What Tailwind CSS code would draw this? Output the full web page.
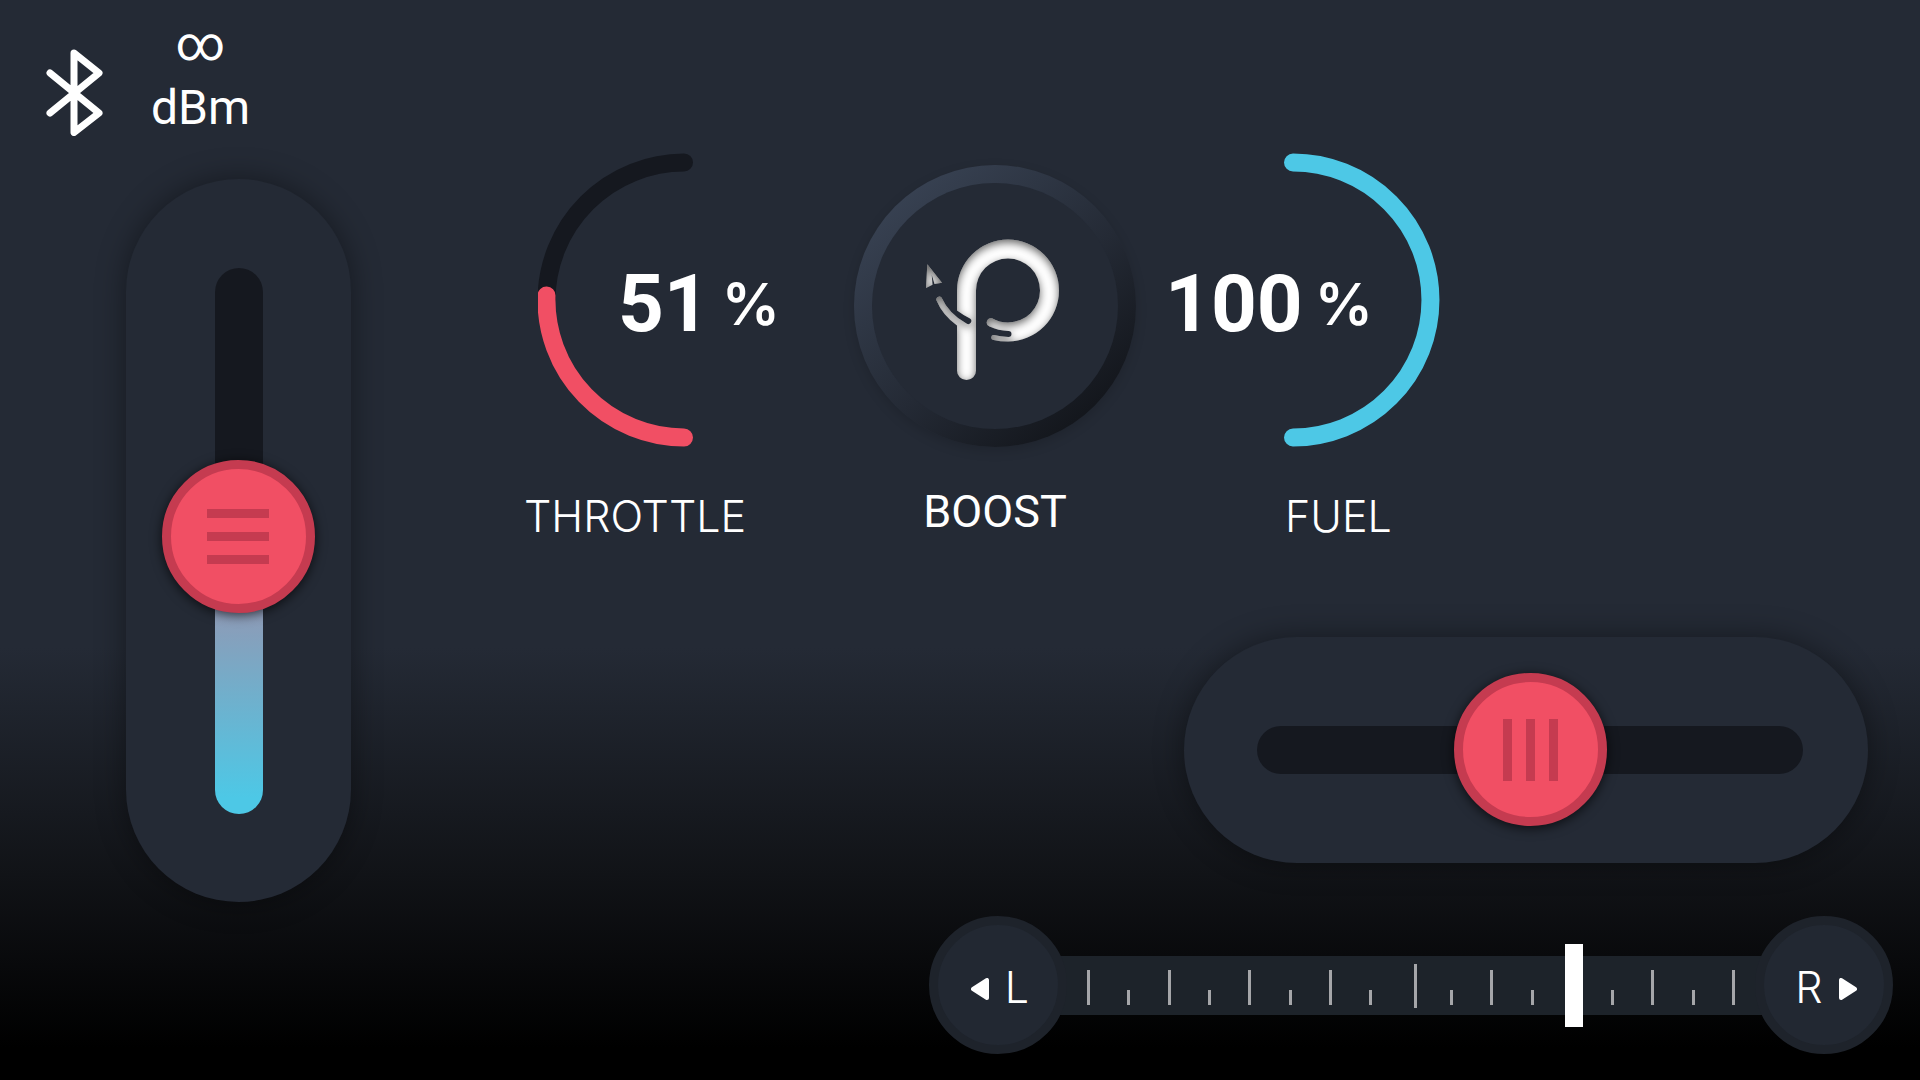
<!DOCTYPE html>
<html lang="en">
<head>
  <meta charset="UTF-8" />
  <title>Remote Controller</title>
  <meta name="viewport" content="width=device-width, initial-scale=1.0" />
  <script src="https://cdn.jsdelivr.net/npm/@tailwindcss/browser@4"></script>
</head>
<body class="min-h-screen flex overflow-x-hidden bg-[linear-gradient(180deg,#242a35_60%,#111317_81%,#000_97%)] font-['Roboto','DejaVu_Sans',sans-serif] text-white">

  <!-- connection + throttle slider -->
  <aside class="shrink-0 pt-4">
    <div class="flex items-end gap-12 pl-[46px]">
      <svg class="w-[57px] h-[88px]" viewBox="0 0 57 88" fill="none" stroke="#fff" stroke-width="7" stroke-linecap="round" stroke-linejoin="round" role="img" aria-label="Bluetooth">
        <path d="M4 25 L53 65 L28 84.500 V5 L53 25 L4 65" />
      </svg>
      <div class="flex flex-col gap-2 text-center text-5xl leading-[56px]">
        <div>∞</div>
        <div>dBm</div>
      </div>
    </div>

    <div class="mt-[43px] ml-[126px] w-[225px] h-[723px] flex items-center justify-center rounded-full bg-[#242a35] shadow-[0_0_30px_rgba(0,0,0,0.4)]">
      <input
        type="range" min="0" max="100" value="51" aria-label="Throttle"
        class="appearance-none [writing-mode:vertical-lr] [direction:rtl] w-[153px] h-[546px] bg-transparent flex [&::-webkit-slider-runnable-track]:w-12 [&::-webkit-slider-runnable-track]:h-[546px] [&::-webkit-slider-runnable-track]:rounded-full [&::-webkit-slider-runnable-track]:bg-[linear-gradient(180deg,#15181f_49%,#a888a3_49%,#4dc8e6_97%)] [&::-webkit-slider-thumb]:appearance-none [&::-webkit-slider-thumb]:w-[153px] [&::-webkit-slider-thumb]:h-[153px] [&::-webkit-slider-thumb]:-ml-[53px] [&::-webkit-slider-thumb]:rounded-full [&::-webkit-slider-thumb]:border-[9px] [&::-webkit-slider-thumb]:border-[#c53b50] [&::-webkit-slider-thumb]:bg-[#f14f64] [&::-webkit-slider-thumb]:bg-[repeating-linear-gradient(180deg,#c53b50_0_9px,#f14f64_9px_23px)] [&::-webkit-slider-thumb]:bg-[length:62px_55px] [&::-webkit-slider-thumb]:bg-center [&::-webkit-slider-thumb]:bg-no-repeat [&::-webkit-slider-thumb]:shadow-[0_2px_12px_rgba(0,0,0,0.7)]"
      />
    </div>
  </aside>

  <main class="flex-1 flex flex-col">
    <div class="flex items-start pt-[153px] pl-[173px]">
      <section class="w-64">
        <div class="relative pl-[14px]">
          <svg class="w-[160px] h-[294px]" viewBox="0 0 160 294" fill="none" stroke-width="18" stroke-linecap="round">
            <path d="M146 9.500 A138 138 0 0 0 8.500 147" stroke="#15181f" />
            <path d="M8.500 142.500 A138 138 0 0 0 146 284.500" stroke="#f14f64" />
          </svg>
          <div class="absolute inset-0 flex items-center justify-end pt-2">
            <p class="flex items-center gap-3 text-[80px] leading-20 font-bold">51 <span class="text-[58px] font-semibold font-['Inter']">%</span></p>
          </div>
        </div>
        <h2 class="mt-[45px] text-[43px] leading-12 font-[350] font-['Inter']">THROTTLE</h2>
      </section>

      <section class="ml-[74px] mt-3 flex flex-col items-center">
        <button aria-label="Boost" class="w-[282px] h-[282px] p-[18px] rounded-full bg-[linear-gradient(140deg,#394354_10%,#242a35_55%,#14171d_85%)] shadow-[0_4px_12px_rgba(0,0,0,0.15)]">
          <span class="flex items-center justify-center w-full h-full rounded-full bg-[#242a35]">
            <svg class="w-[180px] h-[180px]" viewBox="5 -4 180 180">
              <defs>
                <filter id="inset" x="-10%" y="-10%" width="120%" height="120%" color-interpolation-filters="sRGB">
                  <feComponentTransfer in="SourceAlpha" result="inverse"><feFuncA type="table" tableValues="1 0" /></feComponentTransfer>
                  <feGaussianBlur in="inverse" stdDeviation="4" />
                  <feOffset dy="3" result="blur" />
                  <feFlood flood-color="#000" flood-opacity="0.6" />
                  <feComposite in2="blur" operator="in" />
                  <feComposite in2="SourceAlpha" operator="in" result="shade" />
                  <feMerge><feMergeNode in="SourceGraphic" /><feMergeNode in="shade" /></feMerge>
                </filter>
              </defs>
              <g fill="#fff" filter="url(#inset)">
                <path d="M57 70.500 A51 51 0 1 1 108 121.500 Q100 121.500 93.500 120 A2.500 2.500 0 0 1 94 115 Q100 116.500 108.500 117 A3 3 0 0 0 108.500 111 Q98 110.500 89.500 106.500 A4.300 4.300 0 0 1 92 98.300 Q99 102.500 108 102.500 A32 32 0 1 0 76 70.500 V150.500 A9.500 9.500 0 0 1 57 150.500 V105.500 Q42.500 95 36.500 80.500 A3 3 0 0 1 41.500 77.500 Q49 94 66.500 103.500 A2.800 2.800 0 0 0 70 98.500 Q63 95 57 90.500 Z" />
                <path d="M27.300 44.300 L42 62.700 L34.500 64 L31.700 54.500 L32.500 64.700 L26 68 Z" />
              </g>
            </svg>
          </span>
        </button>
        <h2 class="mt-[41px] text-[45px] leading-12">BOOST</h2>
      </section>

      <section class="ml-[29px] w-[275px]">
        <div class="relative flex justify-end">
          <svg class="w-[160px] h-[294px]" viewBox="0 0 160 294" fill="none" stroke-width="18" stroke-linecap="round">
            <path d="M13 9.500 A137.500 137.500 0 0 1 13 284.500" stroke="#4dc8e6" />
          </svg>
          <div class="absolute inset-0 flex items-center pt-2">
            <p class="flex items-center gap-3 text-[80px] leading-20 font-bold">100 <span class="text-[58px] font-semibold font-['Inter']">%</span></p>
          </div>
        </div>
        <h2 class="mt-[45px] pl-[120px] text-[43px] leading-12 font-[350] font-['Inter']">FUEL</h2>
      </section>
    </div>

    <!-- direction slider -->
    <div class="mt-auto mr-[52px] self-end w-[684px] h-[226px] pl-2 flex items-center justify-center rounded-full bg-[#242a35] shadow-[0_0_30px_rgba(0,0,0,0.4)]">
      <input
        type="range" min="0" max="100" value="50" aria-label="Direction"
        class="appearance-none w-[546px] h-[153px] bg-transparent [&::-webkit-slider-runnable-track]:h-12 [&::-webkit-slider-runnable-track]:rounded-full [&::-webkit-slider-runnable-track]:bg-[#15181f] [&::-webkit-slider-thumb]:appearance-none [&::-webkit-slider-thumb]:w-[153px] [&::-webkit-slider-thumb]:h-[153px] [&::-webkit-slider-thumb]:-mt-[53px] [&::-webkit-slider-thumb]:rounded-full [&::-webkit-slider-thumb]:border-[9px] [&::-webkit-slider-thumb]:border-[#c53b50] [&::-webkit-slider-thumb]:bg-[#f14f64] [&::-webkit-slider-thumb]:bg-[repeating-linear-gradient(90deg,#c53b50_0_9px,#f14f64_9px_23px)] [&::-webkit-slider-thumb]:bg-[length:55px_62px] [&::-webkit-slider-thumb]:bg-center [&::-webkit-slider-thumb]:bg-no-repeat [&::-webkit-slider-thumb]:shadow-[0_2px_12px_rgba(0,0,0,0.7)]"
      />
    </div>

    <!-- trim scale -->
    <div class="mt-[53px] mr-[27px] mb-[26px] self-end w-[964px] flex items-center">
      <button class="relative z-10 shrink-0 w-[138px] h-[138px] pl-1 pt-1 flex items-center justify-center gap-4 rounded-full border-[9px] border-[#1e232b] bg-[#222832] text-[43px] leading-12 font-[350] font-['Inter']">
        <svg class="w-[18px] h-[22px] mt-1" viewBox="0 0 18 22"><path d="M2 11 L16 2 V20 Z" fill="#fff" stroke="#fff" stroke-width="4" stroke-linejoin="round" /></svg>
        L
      </button>
      <div class="relative flex-1 -mx-3 h-[59px] flex items-center justify-center bg-[#1d232a]">
        <svg class="w-[650px] h-[59px]" viewBox="0 0 650 59" fill="none" stroke="#a5a6a9" stroke-width="3">
          <path d="M2.500 14 V49 M83.500 14 V49 M163.500 14 V49 M244.500 14 V49 M329.500 8 V52 M405.500 14 V49 M486.500 14 V49 M566.500 14 V49 M647.500 14 V49" />
          <path d="M42.500 34 V49 M123.500 34 V49 M204.500 34 V49 M284.500 34 V49 M365.500 34 V49 M446.500 34 V49 M526.500 34 V49 M607.500 34 V49" />
        </svg>
        <div class="absolute inset-0 flex items-center justify-center">
          <input
            type="range" min="0" max="100" value="75" aria-label="Trim"
            class="appearance-none shrink-0 w-[668px] h-[83px] bg-transparent [&::-webkit-slider-thumb]:appearance-none [&::-webkit-slider-thumb]:w-[18px] [&::-webkit-slider-thumb]:h-[83px] [&::-webkit-slider-thumb]:bg-white"
          />
        </div>
      </div>
      <button class="relative z-10 shrink-0 w-[138px] h-[138px] pl-1 pt-1 flex items-center justify-center gap-4 rounded-full border-[9px] border-[#1e232b] bg-[#222832] text-[43px] leading-12 font-[350] font-['Inter']">
        R
        <svg class="w-[18px] h-[22px] mt-1" viewBox="0 0 18 22"><path d="M16 11 L2 2 V20 Z" fill="#fff" stroke="#fff" stroke-width="4" stroke-linejoin="round" /></svg>
      </button>
    </div>
  </main>

</body>
</html>
